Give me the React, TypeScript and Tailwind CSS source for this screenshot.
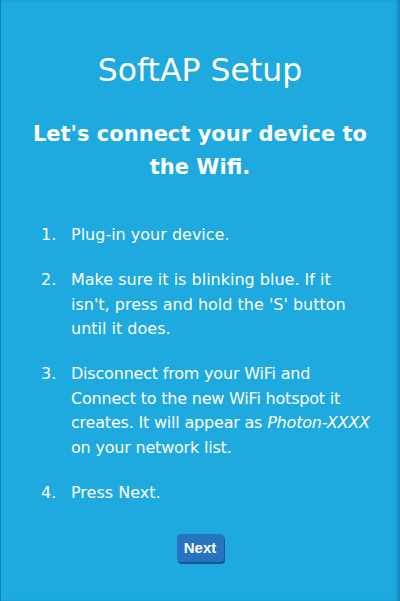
const steps = [
  { text: <>Plug-in your device.</> },
  { text: <>Make sure it is blinking blue. If it isn't, press and hold the 'S' button until it does.</> },
  {
    text: (
      <span className="tracking-[-0.2px]">
        Disconnect from your WiFi and Connect to the new WiFi hotspot it creates. It will appear as{" "}
        <em className="whitespace-nowrap">Photon-XXXX</em> on your network list.
      </span>
    ),
  },
  { text: <>Press Next.</> },
];

export default function App() {
  return (
    <div
      className="min-h-screen w-full bg-[#1ea9df] text-white shadow-[inset_-4px_0_4px_-2px_rgba(0,40,80,0.35),inset_1px_0_0_rgba(0,40,80,0.3)]"
      style={{ fontFamily: "'DejaVu Sans', sans-serif" }}
    >
      <div className="flex flex-col items-center pt-[49px] px-[28px]">
        <h1 className="text-[31.5px] leading-[42px]">SoftAP Setup</h1>
        <h2 className="mt-[27px] text-[21px] leading-[33px] font-bold text-center">
          Let's connect your device to the Wifi.
        </h2>
      </div>

      {/* Steps */}
      <ol className="mt-[39px] pl-[41px] pr-[27px] flex flex-col gap-[20.5px] text-[16px] leading-[24.5px]">
        {steps.map((s, i) => (
          <li key={i} className="flex">
            <span className="w-[30px] shrink-0">{i + 1}.</span>
            <span>{s.text}</span>
          </li>
        ))}
      </ol>

      <div className="flex justify-center mt-[29px]">
        <button
          className="bg-[#2673c2] rounded-[4px] w-[47px] h-[28px] text-[15px] font-bold shadow-[1px_2px_0_#1b5590]"
          style={{ fontFamily: "'Liberation Sans', Arial, sans-serif" }}
        >
          Next
        </button>
      </div>
    </div>
  );
}
